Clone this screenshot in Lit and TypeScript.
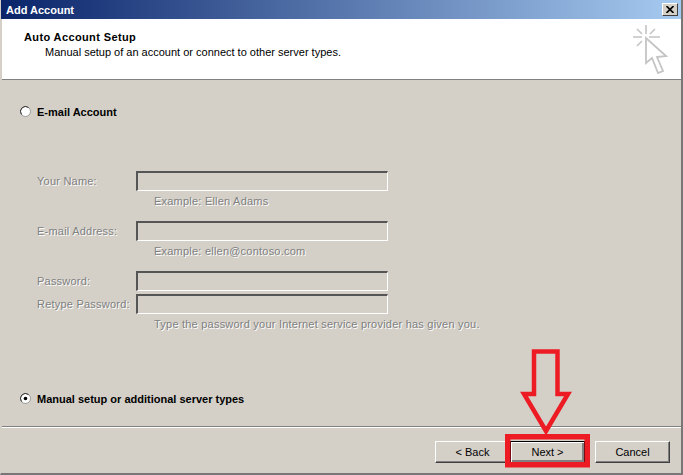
import { LitElement, html, css } from "lit";
import { customElement } from "lit/decorators.js";

@customElement("app-root")
export class AppRoot extends LitElement {
  static styles = css`
    :host { display: block; width: 683px; height: 475px; font-family: "Liberation Sans", Arial, sans-serif; font-size: 11px; color: #000; }
    .win { position: relative; box-sizing: border-box; width: 683px; height: 475px; display: flex; flex-direction: column; background: #d4d0c8; border-left: 1px solid #d4d0c8; border-right: 2px solid #777; border-bottom: 2px solid #777; overflow: hidden; }
    .title { box-sizing: border-box; height: 19px; flex: none; display: flex; align-items: center; justify-content: space-between; padding: 0 3px 0 5px; background: linear-gradient(90deg, #0a246a, #a6caf0); color: #fff; font-weight: 700; }
    .x { box-sizing: border-box; width: 16px; height: 13px; background: #d4d0c8; border: 1px solid; border-color: #fff #404040 #404040 #fff; display: flex; align-items: center; justify-content: center; }
    .head { box-sizing: border-box; height: 61px; flex: none; background: #fff; margin-left: 1px; border-bottom: 1px solid #808080; display: flex; justify-content: space-between; }
    .head-text { padding: 12px 0 0 22px; }
    .head b { display: block; line-height: 13px; letter-spacing: 0.38px; }
    .head span { display: block; padding-left: 21px; line-height: 14px; margin-top: 1px; white-space: nowrap; }
    .cursor { margin: 5px 13px 0 0; }
    .body { flex: 1; padding: 0 0 0 19px; display: flex; flex-direction: column; }
    .radio { display: flex; align-items: center; gap: 6px; font-weight: 700; height: 13px; }
    .r1 { margin-top: 25px; }
    .r2 { margin-top: 48px; }
    .dot { width: 11px; height: 11px; flex: none; }
    .form { margin: 53px 0 0 17px; display: grid; grid-template-columns: 99px 252px; color: #808080; text-shadow: 1px 1px 0 #fff; letter-spacing: 0.22px; }
    .lab { height: 20px; display: flex; align-items: center; white-space: nowrap; }
    .inp { box-sizing: border-box; height: 20px; width: 252px; border: 2px solid; border-color: #555 #fff #fff #555; border-right-width: 1px; border-bottom-width: 1px; }
    .hint { grid-column: 2; padding-left: 18px; height: 30px; line-height: 21px; white-space: nowrap; }
    .hint.short { height: 3px; }
    .foot { box-sizing: border-box; flex: none; height: 47px; border-top: 1px solid #808080; box-shadow: inset 0 1px 0 #fff; display: flex; justify-content: flex-end; align-items: flex-start; padding: 14px 11px 0 0; margin-left: 1px; }
    .btn { box-sizing: border-box; width: 75px; height: 22px; background: #d4d0c8; font: inherit; color: #000; padding: 0; border: 1px solid; border-color: #fff #404040 #404040 #fff; box-shadow: inset -1px -1px 0 #808080; }
    .btn.def { border-color: #000; box-shadow: inset 1px 1px 0 #fff, inset -2px -2px 0 #808080; margin-right: 10px; }
    .mark { position: absolute; left: -1px; top: 0; pointer-events: none; }
  `;

  render() {
    return html`<div class="win">
      <div class="title"><span>Add Account</span>
        <div class="x"><svg width="8" height="7" viewBox="0 0 8 7"><path d="M0.5 0L7.5 7M7.5 0L0.5 7" stroke="#000" stroke-width="1.6"/></svg></div>
      </div>
      <div class="head">
        <div class="head-text"><b>Auto Account Setup</b><span>Manual setup of an account or connect to other server types.</span></div>
        <svg class="cursor" width="36" height="50" viewBox="0 0 36 50" fill="none" stroke="#c4c4c4">
          <path stroke-width="1.6" d="M14 1V10M1 13H10M17 13H28M5 5L10 10M23 5L18 10M5 22L10 17"/>
          <path stroke-width="1.8" fill="#fff" d="M14 14V39L20 34L26 49L31 47L25 33L34 32Z"/>
        </svg>
      </div>
      <div class="body">
        <label class="radio r1"><svg class="dot" viewBox="0 0 11 11"><circle cx="5.5" cy="5.5" r="5" fill="#fff" stroke="#999"/><path d="M1.5 8.5A5 5 0 0 1 8.5 1.5" fill="none" stroke="#333"/></svg>E-mail Account</label>
        <div class="form">
          <div class="lab">Your Name:</div><div class="inp"></div>
          <div class="hint">Example: Ellen Adams</div>
          <div class="lab">E-mail Address:</div><div class="inp"></div>
          <div class="hint">Example: ellen@contoso.com</div>
          <div class="lab">Password:</div><div class="inp"></div>
          <div class="hint short"></div>
          <div class="lab">Retype Password:</div><div class="inp"></div>
          <div class="hint">Type the password your Internet service provider has given you.</div>
        </div>
        <label class="radio r2"><svg class="dot" viewBox="0 0 11 11"><circle cx="5.5" cy="5.5" r="5" fill="#fff" stroke="#999"/><path d="M1.5 8.5A5 5 0 0 1 8.5 1.5" fill="none" stroke="#333"/><circle cx="5.5" cy="5.5" r="1.8" fill="#000"/></svg>Manual setup or additional server types</label>
      </div>
      <div class="foot">
        <button class="btn">&lt; Back</button>
        <button class="btn def">Next &gt;</button>
        <button class="btn">Cancel</button>
      </div>
      <svg class="mark" width="683" height="475" fill="none" stroke="#ed1c24">
        <path stroke-width="4.5" d="M534 351.5H557.5V394H568L546 431L524 394H534Z"/>
        <rect stroke-width="5.5" x="507.75" y="436.75" width="79.5" height="28"/>
      </svg>
    </div>`;
  }
}
